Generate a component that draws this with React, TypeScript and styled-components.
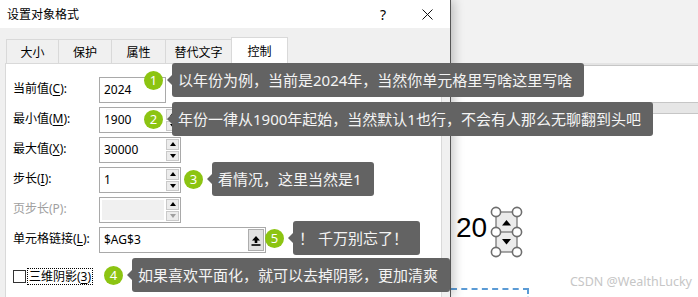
import React from 'react';
import styled, { createGlobalStyle } from 'styled-components';

const GlobalStyle = createGlobalStyle`
  html, body {
    margin: 0;
    padding: 0;
    background: #fff;
  }
  body {
    font-family: "Noto Sans", "Noto Sans CJK SC", sans-serif;
  }
`;

const tabs = [
  { label: '大小', w: 53 },
  { label: '保护', w: 54 },
  { label: '属性', w: 55 },
  { label: '替代文字', w: 67 },
  { label: '控制', w: 57, active: true },
];

const callouts = [
  { n: 1, x: 144, y: 63, text: '以年份为例，当前是2024年，当然你单元格里写啥这里写啥' },
  { n: 2, x: 144, y: 102, text: '年份一律从1900年起始，当然默认1也行，不会有人那么无聊翻到头吧' },
  { n: 3, x: 184, y: 162, text: '看情况，这里当然是1' },
  { n: 5, x: 265, y: 221, text: '！ 千万别忘了！' },
  { n: 4, x: 104, y: 258, text: '如果喜欢平面化，就可以去掉阴影，更加清爽' },
];

export default function App() {
  return (
    <Page>
      <GlobalStyle />
      <Dialog>
        <TitleBar>
          <Title>设置对象格式</Title>
          <Help>?</Help>
          <Close>
            <svg width="11" height="11" viewBox="0 0 11 11">
              <path d="M0.5 0.5 L10.5 10.5 M10.5 0.5 L0.5 10.5" stroke="#111" strokeWidth="1" />
            </svg>
          </Close>
        </TitleBar>
        <TabStrip>
          {tabs.map((t) => (
            <Tab key={t.label} $w={t.w} $active={!!t.active}>
              {t.label}
            </Tab>
          ))}
        </TabStrip>
        <Panel>
          <Form>
            <Row>
              <Label>
                当前值(<u>C</u>):
              </Label>
              <InputBox $w={67}>
                <Value>2024</Value>
              </InputBox>
            </Row>
            <Row>
              <Label>
                最小值(<u>M</u>):
              </Label>
              <InputBox $w={82}>
                <Value>1900</Value>
                <Spin />
              </InputBox>
            </Row>
            <Row>
              <Label>
                最大值(<u>X</u>):
              </Label>
              <InputBox $w={82}>
                <Value>30000</Value>
                <Spin />
              </InputBox>
            </Row>
            <Row>
              <Label>
                步长(<u>I</u>):
              </Label>
              <InputBox $w={82}>
                <Value>1</Value>
                <Spin />
              </InputBox>
            </Row>
            <Row>
              <Label $disabled>页步长(P):</Label>
              <InputBox $w={82}>
                <Value $disabled />
                <Spin disabled />
              </InputBox>
            </Row>
            <Row>
              <Label>
                单元格链接(<u>L</u>):
              </Label>
              <InputBox $w={167}>
                <Value>$AG$3</Value>
                <PickButton>
                  <svg width="10" height="11" viewBox="0 0 10 11">
                    <path d="M5 1 L9 5.5 L6.3 5.5 L6.3 8 L3.7 8 L3.7 5.5 L1 5.5 Z" fill="#000" />
                    <rect x="0.5" y="9.2" width="9" height="1.6" fill="#000" />
                  </svg>
                </PickButton>
              </InputBox>
            </Row>
            <CheckRow>
              <CheckBox />
              <CheckLabel>
                三维阴影(<u>3</u>)
              </CheckLabel>
            </CheckRow>
          </Form>
        </Panel>
      </Dialog>

      <Excel>
        <Ribbon />
        <RibbonEdge />
        <FormulaBar />
        <HeaderBand />
        <Sheet>
          <SpinControl>
            <CellValue>20</CellValue>
            <svg width="46" height="60" viewBox="484 202 46 60">
              <rect x="496" y="212" width="21" height="40" fill="#ebebeb" stroke="#6e6e6e" strokeWidth="1.2" />
              <line x1="496" y1="232" x2="517" y2="232" stroke="#6e6e6e" strokeWidth="1.2" />
              <polygon points="502,225.5 511,225.5 506.5,220" fill="#000" />
              <polygon points="502,239 511,239 506.5,244.5" fill="#000" />
              {[212, 232, 252].map((cy) =>
                [496, 517].map((cx) => (
                  <circle key={`${cx}-${cy}`} cx={cx} cy={cy} r="4.6" fill="#fff" stroke="#6e6e6e" strokeWidth="1.6" />
                )),
              )}
            </svg>
          </SpinControl>
          <DashedShape />
        </Sheet>
      </Excel>

      {callouts.map((c) => (
        <Callout key={c.n} $x={c.x} $y={c.y}>
          <Badge>{c.n}</Badge>
          <Bubble>{c.text}</Bubble>
        </Callout>
      ))}

      <Watermark>CSDN @WealthLucky</Watermark>
    </Page>
  );
}

const Spin = ({ disabled }: { disabled?: boolean }) => (
  <Spinner>
    <SpinButton>
      <Arrow $dir="up" />
    </SpinButton>
    <SpinButton>
      <Arrow $dir="down" $disabled={disabled} />
    </SpinButton>
  </Spinner>
);

const Page = styled.div`
  position: relative;
  display: flex;
  width: 698px;
  height: 297px;
  overflow: hidden;
  background: #fff;
`;

const Dialog = styled.div`
  position: relative;
  z-index: 1;
  width: 451px;
  flex-shrink: 0;
  box-sizing: border-box;
  display: flex;
  flex-direction: column;
  background: #f0f0f0;
  border-right: 1px solid #555;
  box-shadow: 3px 0 10px rgba(0, 0, 0, 0.22);
`;

const TitleBar = styled.div`
  height: 28px;
  display: flex;
  align-items: center;
  padding-left: 7px;
  background: #fff;
  font-size: 12px;
  color: #000;
`;

const Title = styled.span`
  flex: 1;
`;

const Help = styled.span`
  width: 30px;
  margin-right: 7px;
  text-align: center;
  font-size: 14px;
`;

const Close = styled.span`
  width: 45px;
  display: flex;
  justify-content: center;
`;

const TabStrip = styled.div`
  position: relative;
  z-index: 1;
  height: 26px;
  margin-top: 9px;
  padding-left: 6px;
  display: flex;
  align-items: flex-end;
`;

const Tab = styled.div<{ $w: number; $active: boolean }>`
  width: ${(p) => p.$w}px;
  height: ${(p) => (p.$active ? 27 : 24)}px;
  margin-left: -1px;
  margin-bottom: ${(p) => (p.$active ? -1 : 0)}px;
  box-sizing: border-box;
  display: flex;
  align-items: center;
  justify-content: center;
  border: 1px solid #d9d9d9;
  border-bottom: none;
  background: ${(p) => (p.$active ? '#fff' : '#f0f0f0')};
  font-size: 12px;
  color: #000;
  &:first-child {
    margin-left: 0;
  }
`;

const Panel = styled.div`
  flex: 1;
  margin-left: 5px;
  width: 437px;
  box-sizing: border-box;
  background: #fff;
  border: 1px solid #d9d9d9;
  border-bottom: none;
  padding: 13px 0 0 7px;
`;

const Form = styled.div`
  display: flex;
  flex-direction: column;
  gap: 4px;
`;

const Row = styled.div`
  height: 26px;
  display: flex;
  align-items: center;
`;

const Label = styled.span<{ $disabled?: boolean }>`
  width: 86px;
  padding-bottom: 5px;
  font-size: 12px;
  color: ${(p) => (p.$disabled ? '#a0a0a0' : '#000')};
  u {
    text-underline-offset: 2px;
  }
`;

const InputBox = styled.div<{ $w: number }>`
  width: ${(p) => p.$w}px;
  height: 26px;
  box-sizing: border-box;
  display: flex;
  border: 1px solid #a9a9a9;
  background: #fff;
`;

const Value = styled.div<{ $disabled?: boolean }>`
  flex: 1;
  margin: ${(p) => (p.$disabled ? '2px 1px 2px 2px' : '0')};
  padding-left: 4px;
  font-size: 12px;
  line-height: 24px;
  color: #000;
  background: ${(p) => (p.$disabled ? '#f0f0f0' : 'transparent')};
`;

const Spinner = styled.div`
  width: 13px;
  margin: 1px;
  display: flex;
  flex-direction: column;
  gap: 1px;
`;

const SpinButton = styled.div`
  flex: 1;
  display: flex;
  align-items: center;
  justify-content: center;
  background: #ececec;
  border: 1px solid #c9c9c9;
`;

const Arrow = styled.span<{ $dir: 'up' | 'down'; $disabled?: boolean }>`
  width: 0;
  height: 0;
  border-left: 3.5px solid transparent;
  border-right: 3.5px solid transparent;
  ${(p) =>
    p.$dir === 'up'
      ? `border-bottom: 4px solid ${p.$disabled ? '#a0a0a0' : '#000'};`
      : `border-top: 4px solid ${p.$disabled ? '#a0a0a0' : '#000'};`}
`;

const PickButton = styled.div`
  width: 16px;
  margin: 1px 1px 1px 0;
  box-sizing: border-box;
  display: flex;
  align-items: center;
  justify-content: center;
  background: #e1e1e1;
  border: 1px solid #adadad;
`;

const CheckRow = styled.div`
  margin-top: 10px;
  height: 18px;
  display: flex;
  align-items: center;
`;

const CheckBox = styled.span`
  width: 13px;
  height: 13px;
  box-sizing: border-box;
  border: 1px solid #333;
  background: #fff;
`;

const CheckLabel = styled.span`
  margin-left: 2px;
  padding: 0 1px;
  font-size: 12px;
  line-height: 15px;
  color: #000;
  outline: 1px dotted #000;
  outline-offset: 0;
  u {
    text-underline-offset: 2px;
  }
`;

const Excel = styled.div`
  flex: 1;
  display: flex;
  flex-direction: column;
  background: #fff;
`;

const Ribbon = styled.div`
  height: 63px;
  background: #f2f2f2;
`;

const RibbonEdge = styled.div`
  height: 2px;
  background: #e4e4e4;
  border-bottom: 1px solid #c6c6c6;
`;

const FormulaBar = styled.div`
  height: 36px;
  background: #fff;
  border-bottom: 1px solid #c6c6c6;
`;

const HeaderBand = styled.div`
  height: 10px;
  background: #e6e6e6;
  border-bottom: 1px solid #c6c6c6;
`;

const Sheet = styled.div`
  position: relative;
  flex: 1;
`;

const SpinControl = styled.div`
  margin-top: 88px;
  padding-left: 5px;
  display: flex;
  align-items: flex-start;
`;

const CellValue = styled.span`
  margin-top: 12px;
  margin-right: -3px;
  font-family: "Liberation Sans", sans-serif;
  font-size: 28px;
  line-height: 28px;
  color: #000;
`;

const DashedShape = styled.div`
  position: absolute;
  left: 0;
  top: 174px;
  width: 76px;
  height: 30px;
  border-top: 2px dashed #5b9bd5;
  border-right: 2px dashed #5b9bd5;
`;

const Callout = styled.div<{ $x: number; $y: number }>`
  position: absolute;
  left: ${(p) => p.$x}px;
  top: ${(p) => p.$y}px;
  z-index: 2;
  display: flex;
  align-items: center;
`;

const Badge = styled.span`
  width: 19px;
  height: 19px;
  margin-right: 9px;
  border-radius: 50%;
  background: #8cc412;
  color: #fff;
  font-size: 13px;
  line-height: 19px;
  text-align: center;
`;

const Bubble = styled.div`
  position: relative;
  height: 34px;
  padding: 0 12px 0 6px;
  border-radius: 3px;
  background: #636363;
  color: #f4f4f4;
  font-size: 15px;
  line-height: 34px;
  white-space: nowrap;

  &::before {
    content: '';
    position: absolute;
    left: -5px;
    top: 50%;
    transform: translateY(-50%);
    border-top: 5px solid transparent;
    border-bottom: 5px solid transparent;
    border-right: 5px solid #636363;
  }
`;

const Watermark = styled.div`
  position: absolute;
  right: 6px;
  top: 273px;
  font-size: 12.5px;
  color: #c6c6c6;
`;
